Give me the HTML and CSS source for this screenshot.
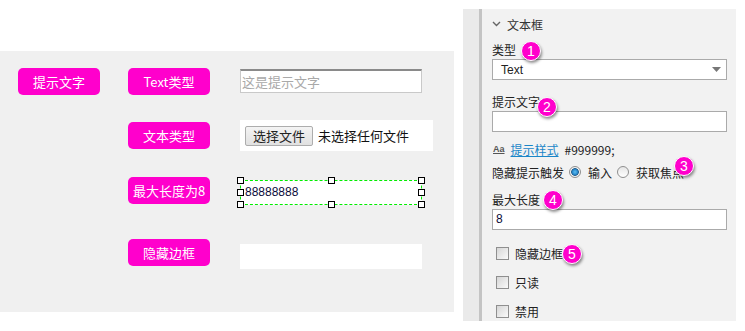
FILE: index.html
```html
<!DOCTYPE html>
<html lang="zh-CN">
<head>
  <meta charset="UTF-8" />
  <title>文本框</title>
  <link rel="stylesheet" href="styles.css">
</head>
<body>
  <div class="page">
    <div class="stage">
      <div class="canvas">
        <div class="row">
          <div class="tag">提示文字</div>
          <div class="tag">Text类型</div>
          <input class="field field-first" type="text" placeholder="这是提示文字">
        </div>
        <div class="row">
          <div class="spacer"></div>
          <div class="tag">文本类型</div>
          <div class="filebox">
            <span class="filebtn">选择文件</span>
            <span class="filetext">未选择任何文件</span>
          </div>
        </div>
        <div class="row">
          <div class="spacer"></div>
          <div class="tag">最大长度为8</div>
          <div class="selected">
            <div class="field field-max">88888888</div>
            <span class="handle h-tl"></span><span class="handle h-tc"></span><span class="handle h-tr"></span>
            <span class="handle h-ml"></span><span class="handle h-mr"></span>
            <span class="handle h-bl"></span><span class="handle h-bc"></span><span class="handle h-br"></span>
          </div>
        </div>
        <div class="row">
          <div class="spacer"></div>
          <div class="tag">隐藏边框</div>
          <div class="field field-plain"></div>
        </div>
      </div>
    </div>

    <div class="panel">
      <div class="strip"></div>
      <div class="panel-body">
        <div class="section-head">
          <svg width="9" height="6" viewBox="0 0 9 6"><polyline points="1,1 4.5,4.5 8,1" fill="none" stroke="#666" stroke-width="1.4"/></svg>
          <span>文本框</span>
        </div>

        <div class="label lbl-type">类型<span class="badge b1">1</span></div>
        <div class="select">
          <span>Text</span>
          <svg width="9" height="5" viewBox="0 0 9 5"><polygon points="0,0 9,0 4.5,5" fill="#777"/></svg>
        </div>

        <div class="label lbl-hint">提示文字<span class="badge b2">2</span></div>
        <div class="box"></div>

        <div class="style-row">
          <span class="aa">Aa</span>
          <a class="link">提示样式</a>
          <span>#999999;</span>
        </div>

        <div class="radio-row">
          <span>隐藏提示触发</span>
          <span class="radio on"></span><span class="opt">输入</span>
          <span class="radio"></span><span>获取焦点</span>
          <span class="badge b3">3</span>
        </div>

        <div class="label lbl-max">最大长度<span class="badge b4">4</span></div>
        <div class="box box-val">8</div>

        <div class="checks">
          <div class="check"><span class="cb"></span><span class="cb-text">隐藏边框<span class="badge b5">5</span></span></div>
          <div class="check"><span class="cb"></span><span class="cb-text">只读</span></div>
          <div class="check"><span class="cb"></span><span class="cb-text">禁用</span></div>
        </div>
      </div>
    </div>
  </div>
</body>
</html>
```

FILE: styles.css
```css
* {
  margin: 0;
  padding: 0;
  box-sizing: border-box;
}

body {
  background: #fff;
  font-family: "Noto Sans CJK SC", "Liberation Sans", sans-serif;
  color: #222;
  overflow: hidden;
}

.page {
  display: flex;
  width: 745px;
  height: 331px;
}

/* left design canvas */
.stage {
  width: 454px;
  padding-top: 51px;
}

.canvas {
  background: #f0f0f0;
  height: 261px;
  padding: 17px 0 0 18px;
}

.row {
  display: flex;
  align-items: flex-start;
  height: 27px;
  margin-bottom: 27px;
}

.row:nth-child(2) { margin-bottom: 28px; }
.row:nth-child(3) { margin-bottom: 35px; }

.spacer {
  width: 82px;
  margin-right: 28px;
}

.tag {
  width: 82px;
  height: 27px;
  margin-right: 28px;
  background: #ff00cc;
  color: #fff;
  border-radius: 5px;
  font-size: 13px;
  line-height: 27px;
  text-align: center;
  white-space: nowrap;
}

.tag + .tag { margin-right: 30px; }
.spacer + .tag { margin-right: 30px; }

.field {
  width: 182px;
  height: 24px;
  background: #fff;
  font-size: 13px;
}

.field-first {
  margin-top: 1px;
  border: 1px solid #c9c9c9;
  border-top: 2px solid #8a8a8a;
  padding: 0 1px;
  font-family: "Noto Sans CJK SC", sans-serif;
  font-size: 13px;
  outline: none;
}

.field-first::placeholder {
  color: #a9a9a9;
}

.filebox {
  margin-top: -2px;
  width: 193px;
  height: 31px;
  background: #fff;
  display: flex;
  align-items: center;
  padding-left: 5px;
  font-size: 13px;
}

.filebtn {
  width: 68px;
  height: 20px;
  border: 1px solid #adadad;
  border-radius: 2px;
  background: linear-gradient(#f4f4f4, #e1e1e1);
  text-align: center;
  line-height: 18px;
  margin-right: 5px;
}

.filetext {
  color: #111;
}

.selected {
  position: relative;
  margin-top: 3px;
}

.field-max {
  height: 25px;
  border: 1px dashed #00ee00;
  line-height: 23px;
  padding-left: 4px;
  color: #0b0b3a;
  font-family: "Liberation Sans", sans-serif;
  font-size: 12px;
}

.handle {
  position: absolute;
  width: 7px;
  height: 7px;
  background: #fff;
  border: 1px solid #000;
}

.h-tl { left: -3px; top: -3px; }
.h-tc { left: 88px; top: -3px; }
.h-tr { right: -3px; top: -3px; }
.h-ml { left: -3px; top: 9px; }
.h-mr { right: -3px; top: 9px; }
.h-bl { left: -3px; bottom: -3px; }
.h-bc { left: 88px; bottom: -3px; }
.h-br { right: -3px; bottom: -3px; }

.field-plain {
  margin-top: 5px;
  height: 25px;
}

/* right property panel */
.panel {
  margin: 9px 0 10px 9px;
  width: 273px;
  height: 312px;
  display: flex;
  background: #f2f2f2;
}

.strip {
  width: 19px;
  background: #eaeaea;
  border-right: 3px solid #c4c4c4;
  flex-shrink: 0;
}

.panel-body {
  flex: 1;
  padding: 0 9px 0 10px;
  font-size: 12px;
  color: #222;
}

.section-head {
  height: 30px;
  display: flex;
  align-items: center;
  gap: 6px;
  font-size: 12px;
  color: #333;
}

.label {
  position: relative;
  display: block;
  line-height: 19px;
  height: 19px;
}

.lbl-type { margin-top: 1px; }
.lbl-hint { margin-top: 13px; height: 18px; line-height: 18px; }
.lbl-max { margin-top: 8px; }

.select {
  height: 21px;
  border: 1px solid #aaa;
  background: #fff;
  display: flex;
  align-items: center;
  justify-content: space-between;
  padding: 0 5px 0 8px;
  font-family: "Liberation Sans", sans-serif;
  font-size: 12px;
}

.box {
  height: 21px;
  border: 1px solid #aaa;
  background: #fff;
}

.box-val {
  font-family: "Liberation Sans", sans-serif;
  font-size: 12px;
  line-height: 19px;
  padding-left: 3px;
  color: #0b0b3a;
}

.style-row {
  margin-top: 7px;
  height: 20px;
  display: flex;
  align-items: center;
}

.aa {
  font-family: "Liberation Sans", sans-serif;
  font-size: 9px;
  font-weight: bold;
  color: #555;
  text-decoration: underline;
  margin: 0 6px 0 1px;
}

.link {
  color: #1a86c8;
  text-decoration: underline;
  margin-right: 6px;
}

.radio-row {
  position: relative;
  margin-top: 3px;
  height: 20px;
  display: flex;
  align-items: center;
}

.radio {
  width: 12px;
  height: 12px;
  border-radius: 50%;
  border: 1px solid #8f8f8f;
  background: linear-gradient(#e6e6e6, #fff);
  margin: 0 7px 0 5px;
}

.radio.on {
  background: radial-gradient(circle, #5fc0f0 0, #2a8ad0 2.5px, #25628f 3.5px, #f2f2f2 4.2px);
}

.opt { margin-right: 0; }

.badge {
  position: absolute;
  width: 20px;
  height: 20px;
  border-radius: 50%;
  background: #ff00cc;
  border: 1px solid #fff;
  box-shadow: 1px 2px 3px rgba(0, 0, 0, 0.45);
  color: #fff;
  font-family: "Liberation Sans", sans-serif;
  font-size: 14px;
  line-height: 18px;
  text-align: center;
}

.b1 { left: 29px; top: 1px; }
.b2 { left: 45px; top: 4px; }
.b3 { left: 182px; top: -6px; }
.b4 { left: 51px; top: 0; }
.b5 { left: 47px; top: -1px; }

.checks {
  margin-top: 13px;
  display: flex;
  flex-direction: column;
  gap: 9px;
}

.check {
  height: 20px;
  display: flex;
  align-items: center;
  padding-left: 4px;
}

.cb {
  width: 13px;
  height: 13px;
  border: 1px solid #8f8f8f;
  background: linear-gradient(135deg, #d6d6d6, #fafafa);
  margin-right: 6px;
}

.cb-text {
  position: relative;
}
```
